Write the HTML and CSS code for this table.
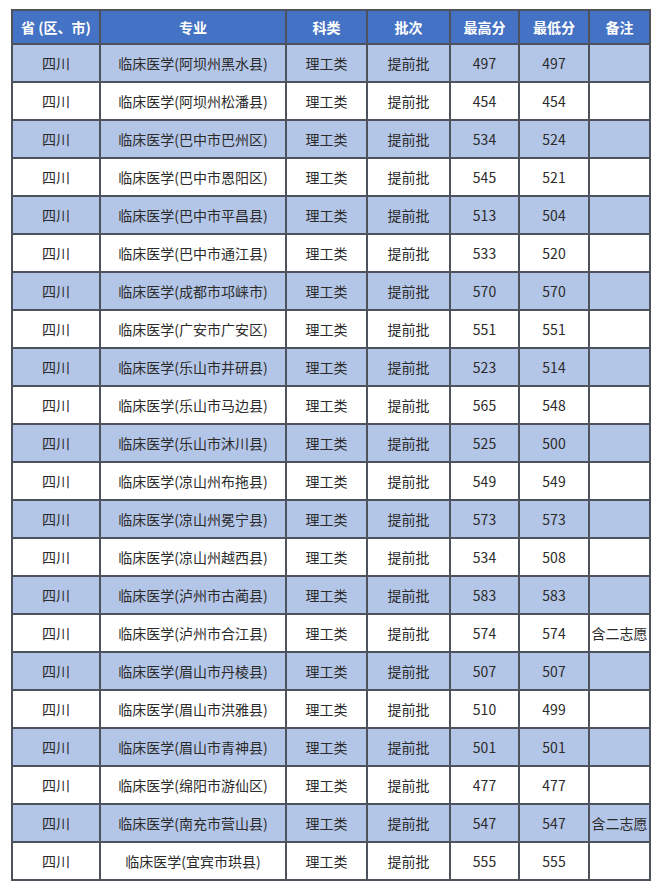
FILE: index.html
```html
<!DOCTYPE html>
<html lang="zh-CN">
<head>
<meta charset="utf-8">
<link rel="stylesheet" href="styles.css">
</head>
<body>
<table class="score-table">
<colgroup>
<col class="c1"><col class="c2"><col class="c3"><col class="c4"><col class="c5"><col class="c6"><col class="c7">
</colgroup>
<thead>
<tr><th>省 (区、市)</th><th>专业</th><th>科类</th><th>批次</th><th>最高分</th><th>最低分</th><th>备注</th></tr>
</thead>
<tbody>
<tr class="alt"><td>四川</td><td>临床医学(阿坝州黑水县)</td><td>理工类</td><td>提前批</td><td>497</td><td>497</td><td></td></tr>
<tr><td>四川</td><td>临床医学(阿坝州松潘县)</td><td>理工类</td><td>提前批</td><td>454</td><td>454</td><td></td></tr>
<tr class="alt"><td>四川</td><td>临床医学(巴中市巴州区)</td><td>理工类</td><td>提前批</td><td>534</td><td>524</td><td></td></tr>
<tr><td>四川</td><td>临床医学(巴中市恩阳区)</td><td>理工类</td><td>提前批</td><td>545</td><td>521</td><td></td></tr>
<tr class="alt"><td>四川</td><td>临床医学(巴中市平昌县)</td><td>理工类</td><td>提前批</td><td>513</td><td>504</td><td></td></tr>
<tr><td>四川</td><td>临床医学(巴中市通江县)</td><td>理工类</td><td>提前批</td><td>533</td><td>520</td><td></td></tr>
<tr class="alt"><td>四川</td><td>临床医学(成都市邛崃市)</td><td>理工类</td><td>提前批</td><td>570</td><td>570</td><td></td></tr>
<tr><td>四川</td><td>临床医学(广安市广安区)</td><td>理工类</td><td>提前批</td><td>551</td><td>551</td><td></td></tr>
<tr class="alt"><td>四川</td><td>临床医学(乐山市井研县)</td><td>理工类</td><td>提前批</td><td>523</td><td>514</td><td></td></tr>
<tr><td>四川</td><td>临床医学(乐山市马边县)</td><td>理工类</td><td>提前批</td><td>565</td><td>548</td><td></td></tr>
<tr class="alt"><td>四川</td><td>临床医学(乐山市沐川县)</td><td>理工类</td><td>提前批</td><td>525</td><td>500</td><td></td></tr>
<tr><td>四川</td><td>临床医学(凉山州布拖县)</td><td>理工类</td><td>提前批</td><td>549</td><td>549</td><td></td></tr>
<tr class="alt"><td>四川</td><td>临床医学(凉山州冕宁县)</td><td>理工类</td><td>提前批</td><td>573</td><td>573</td><td></td></tr>
<tr><td>四川</td><td>临床医学(凉山州越西县)</td><td>理工类</td><td>提前批</td><td>534</td><td>508</td><td></td></tr>
<tr class="alt"><td>四川</td><td>临床医学(泸州市古蔺县)</td><td>理工类</td><td>提前批</td><td>583</td><td>583</td><td></td></tr>
<tr><td>四川</td><td>临床医学(泸州市合江县)</td><td>理工类</td><td>提前批</td><td>574</td><td>574</td><td>含二志愿</td></tr>
<tr class="alt"><td>四川</td><td>临床医学(眉山市丹棱县)</td><td>理工类</td><td>提前批</td><td>507</td><td>507</td><td></td></tr>
<tr><td>四川</td><td>临床医学(眉山市洪雅县)</td><td>理工类</td><td>提前批</td><td>510</td><td>499</td><td></td></tr>
<tr class="alt"><td>四川</td><td>临床医学(眉山市青神县)</td><td>理工类</td><td>提前批</td><td>501</td><td>501</td><td></td></tr>
<tr><td>四川</td><td>临床医学(绵阳市游仙区)</td><td>理工类</td><td>提前批</td><td>477</td><td>477</td><td></td></tr>
<tr class="alt"><td>四川</td><td>临床医学(南充市营山县)</td><td>理工类</td><td>提前批</td><td>547</td><td>547</td><td>含二志愿</td></tr>
<tr><td>四川</td><td>临床医学(宜宾市珙县)</td><td>理工类</td><td>提前批</td><td>555</td><td>555</td><td></td></tr>
</tbody>
</table>
</body>
</html>
```

FILE: styles.css
```css
html, body {
  margin: 0;
  padding: 0;
  background: #ffffff;
}
body {
  padding: 9px 0 0 11px;
  font-family: "Noto Sans CJK SC", "Noto Sans", sans-serif;
  color: #2b2b2b;
}
.score-table {
  border-collapse: collapse;
  table-layout: fixed;
  width: 638px;
  font-size: 14px;
}
.c1 { width: 88px; }
.c2 { width: 186px; }
.c3 { width: 81px; }
.c4 { width: 83px; }
.c5 { width: 69px; }
.c6 { width: 70px; }
.c7 { width: 61px; }
.score-table th,
.score-table td {
  border: 2px solid #4d525c;
  text-align: center;
  padding: 0;
  white-space: nowrap;
  overflow: hidden;
}
.score-table th {
  height: 32px;
  background: #4472c4;
  color: #ffffff;
  font-weight: bold;
}
.score-table td {
  height: 36px;
  background: #ffffff;
}
.score-table tr.alt td {
  background: #b4c6e7;
}
```
